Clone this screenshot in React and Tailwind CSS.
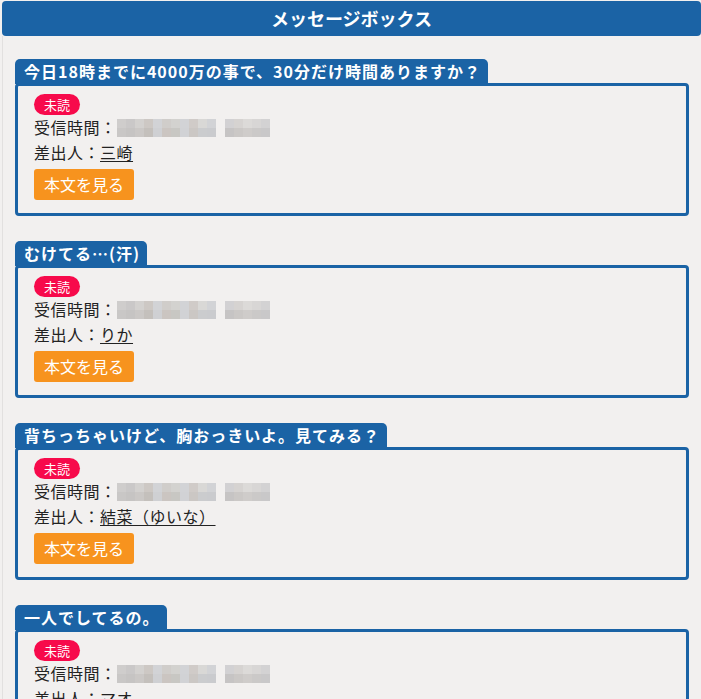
const messages = [
  { title: '今日18時までに4000万の事で、30分だけ時間ありますか？', from: '三崎' },
  { title: 'むけてる…(汗)', from: 'りか' },
  { title: '背ちっちゃいけど、胸おっきいよ。見てみる？', from: '結菜（ゆいな）' },
  { title: '一人でしてるの。', from: 'マオ' },
];

// pixelated time stamp (mosaic cells)
const mosaicA = [
  ['bg-[#cfcdcc]', 'bg-[#cac8c8]', 'bg-[#d3d1cf]', 'bg-[#cdc8c4]', 'bg-[#d2d3d6]', 'bg-[#d0cdca]', 'bg-[#d3d2cf]', 'bg-[#d2d3d6]', 'bg-[#d0cbc8]', 'bg-[#d9d8d6]', 'bg-[#d2d3d6]'],
  ['bg-[#c9c7c6]', 'bg-[#c6c4c3]', 'bg-[#cbc8c6]', 'bg-[#c4c0bc]', 'bg-[#cfd0d3]', 'bg-[#cbc5c1]', 'bg-[#c8c7c3]', 'bg-[#d1d2d5]', 'bg-[#cbc7c4]', 'bg-[#cbccce]', 'bg-[#cacbce]'],
];
const mosaicB = [
  ['bg-[#d2d1d3]', 'bg-[#d6d3d1]', 'bg-[#dcdad8]', 'bg-[#d8d6d5]', 'bg-[#d3d2d3]'],
  ['bg-[#c6c4c4]', 'bg-[#cbc8c6]', 'bg-[#cfccca]', 'bg-[#cbc9c8]', 'bg-[#c9c8c9]'],
];

const Mosaic = ({ cells }) => (
  <span className="inline-flex flex-col">
    {cells.map((row, i) => (
      <span key={i} className="flex">
        {row.map((c, j) => (
          <span key={j} className={`block w-[9px] h-[9px] ${c}`} />
        ))}
      </span>
    ))}
  </span>
);

const MessageCard = ({ msg }) => (
  <div className="mb-[25px] flex flex-col items-start">
    <div className="bg-[#1b63a5] text-white font-bold text-[16px] leading-[25px] tracking-[1px] pl-[9px] pr-[7px] rounded-t-[5px]">
      {msg.title}
    </div>
    <div className="self-stretch -mt-[1px] border-[3px] border-[#1b63a5] rounded-[4px] pl-[16px] pt-[8px] pb-[13px]">
      <div className="w-fit bg-[#f70a4b] text-white text-[13px] leading-[21px] px-[10px] rounded-full">未読</div>
      <div className="flex items-center h-[25px] text-[16px] leading-[25px] tracking-[0.5px] text-[#222]">
        <span>受信時間：</span>
        <span className="flex gap-[9px]">
          <Mosaic cells={mosaicA} />
          <Mosaic cells={mosaicB} />
        </span>
      </div>
      <div className="h-[25px] text-[16px] leading-[25px] tracking-[0.5px] text-[#222]">
        差出人：<span className="underline underline-offset-2">{msg.from}</span>
      </div>
      <button className="block mt-[4px] bg-[#f7931e] text-white text-[16px] leading-[31px] px-[10px] rounded-[3px]">
        本文を見る
      </button>
    </div>
  </div>
);

export default function App() {
  return (
    <div className="min-h-[699px] bg-[#f2f0ef] pt-[1px] font-['Noto_Sans_CJK_JP',sans-serif]">
      <div className="ml-[2px] bg-[#1b63a5] text-white text-center font-bold text-[18px] leading-[35px] rounded-[4px]">
        メッセージボックス
      </div>
      <div className="ml-[2px] border-l border-[#e2e0df] pl-[12px] pr-[12px] pt-[23px]">
        {messages.map((m, i) => (
          <MessageCard key={i} msg={m} />
        ))}
      </div>
    </div>
  );
}
